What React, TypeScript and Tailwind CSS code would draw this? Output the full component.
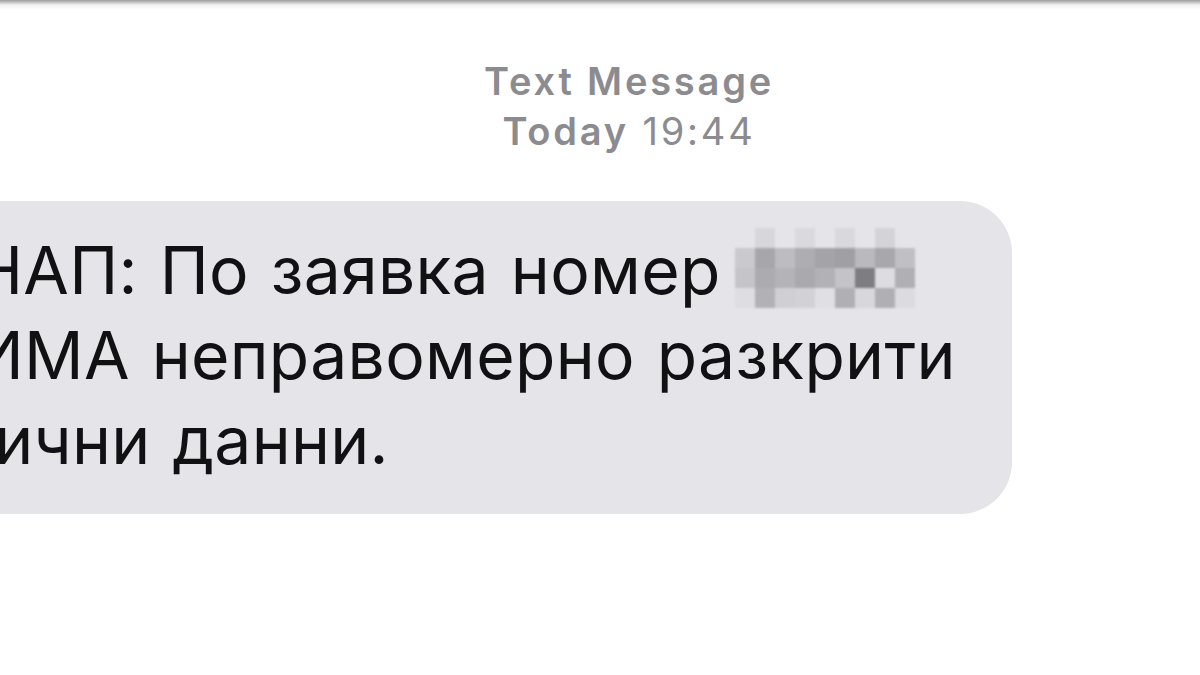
import React from 'react';

// pixelated block that hides the request number
const blurRows: string[][] = [
  ['#e4e4e9', '#d6d6db', '#e4e4e9', '#d9d9de', '#e4e4e9', '#d8d8dd', '#e4e4e9', '#d3d3d8', '#e4e4e9'],
  ['#c9c9ce', '#a6a6ab', '#bcbcc1', '#adadb2', '#a3a3a8', '#9f9fa4', '#b9b9be', '#a7a7ac', '#bfbfc4'],
  ['#c4c4c9', '#ababb0', '#b3b3b8', '#a9a9ae', '#b1b1b6', '#c3c3c8', '#7d7d82', '#dcdce1', '#afafb4'],
  ['#dddde2', '#b1b1b6', '#cfcfd4', '#d1d1d6', '#dfdfe4', '#afafb4', '#d7d7dc', '#afafb4', '#dbdbe0'],
];

const Redacted: React.FC = () => (
  <span className="inline-flex flex-col align-top ml-[14px] blur-[1px]">
    {blurRows.map((row, i) => (
      <span key={i} className="flex">
        {row.map((c, j) => (
          <span key={j} className="w-[20px] h-[20px]" style={{ backgroundColor: c }} />
        ))}
      </span>
    ))}
  </span>
);

export default function App() {
  return (
    <div className="w-[1200px] h-[675px] overflow-hidden bg-white">
      <div className="h-[10px] bg-gradient-to-b from-[#9c9c9c] via-[#f2f2f2] to-white" />

      <div className="flex flex-col items-center pl-[58px] pt-[46px] text-[#8b8b90] text-[38px] leading-[50px] font-['Inter','Liberation_Sans',sans-serif] tracking-[2.8px]">
        <div className="font-semibold">Text Message</div>
        <div>
          <span className="font-semibold">Today</span> 19:44
        </div>
      </div>

      <div className="mt-[45px] -ml-[60px] w-[1072px] h-[313px] rounded-[52px] bg-[#e4e4e9] pl-[34px] pt-[27px] text-[#111113] text-[66px] leading-[85px] font-['Inter','Liberation_Sans',sans-serif] tracking-[0.3px] [word-spacing:3px]">
        <div className="whitespace-nowrap">
          НАП: По заявка номер
          <Redacted />
        </div>
        <div className="whitespace-nowrap">ИМА неправомерно разкрити</div>
        <div className="whitespace-nowrap -ml-[18px]">лични данни.</div>
      </div>
    </div>
  );
}
